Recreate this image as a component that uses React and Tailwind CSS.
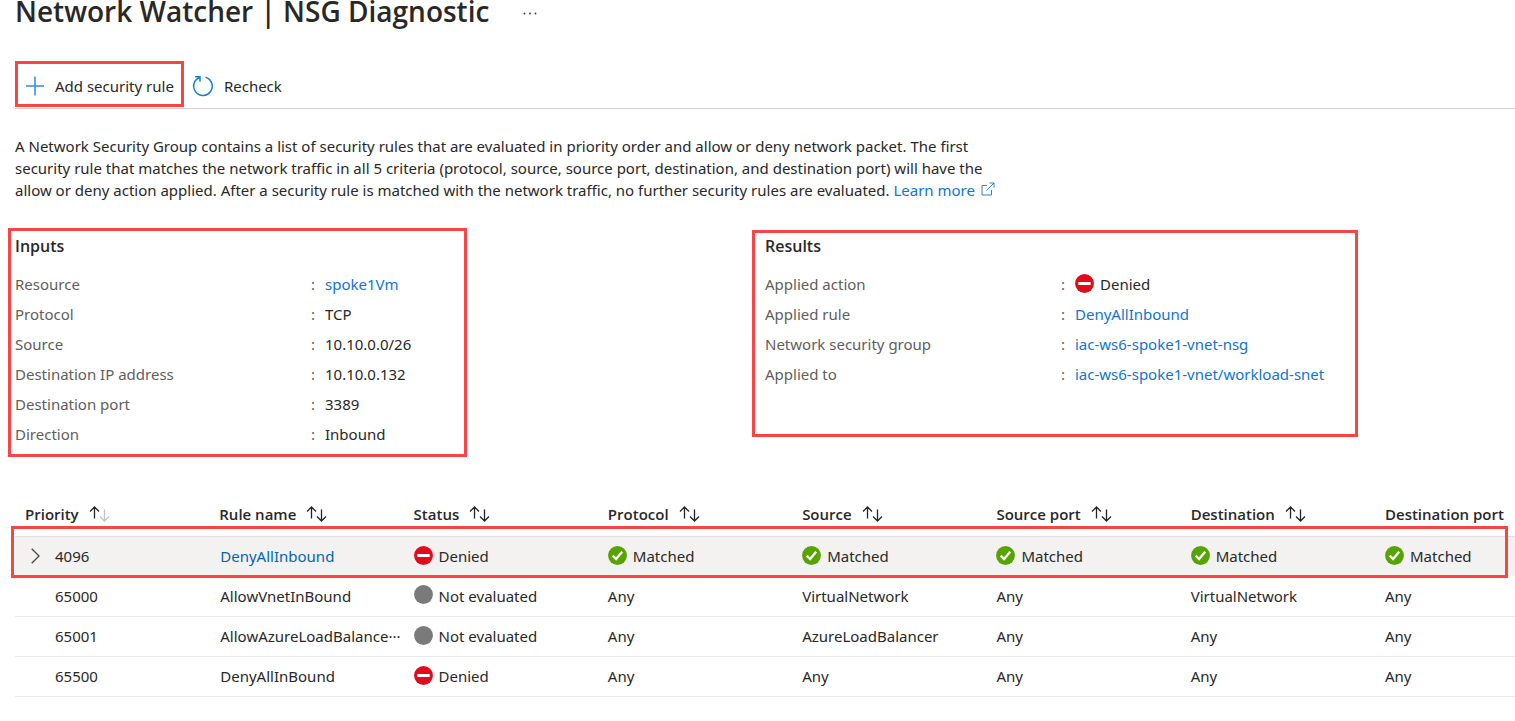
const columns = ['Priority', 'Rule name', 'Status', 'Protocol', 'Source', 'Source port', 'Destination', 'Destination port'];

const rules = [
  { priority: '4096', name: 'DenyAllInbound', link: true, status: 'Denied', cells: ['Matched', 'Matched', 'Matched', 'Matched', 'Matched'] },
  { priority: '65000', name: 'AllowVnetInBound', status: 'Not evaluated', cells: ['Any', 'VirtualNetwork', 'Any', 'VirtualNetwork', 'Any'] },
  { priority: '65001', name: 'AllowAzureLoadBalance···', status: 'Not evaluated', cells: ['Any', 'AzureLoadBalancer', 'Any', 'Any', 'Any'] },
  { priority: '65500', name: 'DenyAllInBound', status: 'Denied', cells: ['Any', 'Any', 'Any', 'Any', 'Any'] },
];

const inputs = [
  ['Resource', <a href="#vm" className="text-[#0f75d1]">spoke1Vm</a>],
  ['Protocol', 'TCP'],
  ['Source', '10.10.0.0/26'],
  ['Destination IP address', '10.10.0.132'],
  ['Destination port', '3389'],
  ['Direction', 'Inbound'],
];

const results = [
  ['Applied action', <StatusLabel text="Denied" />],
  ['Applied rule', <a href="#rule" className="text-[#0f75d1]">DenyAllInbound</a>],
  ['Network security group', <a href="#nsg" className="text-[#0f75d1]">iac-ws6-spoke1-vnet-nsg</a>],
  ['Applied to', <a href="#subnet" className="text-[#0f75d1]">iac-ws6-spoke1-vnet/workload-snet</a>],
];

function StatusIcon({ text }) {
  return (
    <svg viewBox="0 0 19 19" className="mb-0.5 size-[19px] shrink-0" aria-hidden="true">
      {text === 'Denied' && (
        <>
          <circle cx="9.5" cy="9.5" r="9.4" fill="#e00b1c" />
          <rect x="3.3" y="8" width="12.4" height="3" rx="0.4" fill="#fff" />
        </>
      )}
      {text === 'Matched' && (
        <>
          <circle cx="9.5" cy="9.5" r="9.4" fill="#57a300" />
          <path d="M4.7 9.6 8.1 13 14.200 5.700" fill="none" stroke="#fff" strokeWidth="2.300" />
        </>
      )}
      {text === 'Not evaluated' && <circle cx="9.5" cy="9.5" r="9.4" fill="#7a7a7a" />}
    </svg>
  );
}

function StatusLabel({ text }) {
  return (
    <span className="flex items-center gap-1.5 whitespace-nowrap">
      <StatusIcon text={text} />
      {text}
    </span>
  );
}

function SortIcon({ ascending }) {
  return (
    <svg viewBox="0 0 21 16" className="h-4 w-[21px] shrink-0" fill="none" strokeWidth="1.3" aria-hidden="true">
      <path d="M5.500 12.500V1M1 5.500 5.500 1 10 5.500" stroke="#252423" />
      <path d="M15.500 3.500v11.500M11 10.500l4.500 4.500L20 10.500" stroke={ascending ? '#c4c4c4' : '#252423'} />
    </svg>
  );
}

function Facts({ title, rows, className, headingClass }) {
  return (
    <section className={className}>
      <h2 className={`text-base font-semibold font-['Open_Sans',sans-serif] ${headingClass}`}>{title}</h2>
      <dl>
        {rows.map(([label, value]) => (
          <div key={label} className="flex h-[30px] items-center">
            <dt className="flex w-[310px] shrink-0 justify-between pr-2.5 text-[#605e5c]">
              {label}
              <span>:</span>
            </dt>
            <dd className="whitespace-nowrap">{value}</dd>
          </div>
        ))}
      </dl>
    </section>
  );
}

export default function App() {
  return (
    <main className="overflow-x-hidden bg-white pb-6 font-['Noto_Sans','Open_Sans',sans-serif] text-[15px] leading-[22px] text-[#292827]">
      <header className="flex h-[61px] items-start gap-8 pl-[15px]">
        <h1 className="-mt-[9px] font-['Open_Sans',sans-serif] text-[28px] leading-10 font-semibold">Network Watcher | NSG Diagnostic</h1>
        <button type="button" aria-label="More options" className="pt-3 pl-0.5">
          <svg viewBox="0 0 14 3" className="h-[3px] w-3.5" fill="#323130">
            <circle cx="1.500" cy="1.500" r="0.9" />
            <circle cx="7" cy="1.500" r="0.9" />
            <circle cx="12.500" cy="1.500" r="0.9" />
          </svg>
        </button>
      </header>

      <div className="ml-[15px] flex items-center gap-2 border-b border-[#d0d0d0] pb-px">
        <button type="button" className="flex h-[46px] items-center gap-2.5 border-3 border-[#fb4444] pt-1 pr-[7px] pl-[7px] whitespace-nowrap">
          <svg viewBox="0 0 20 20" className="size-5" fill="none" stroke="#2f8ddb" strokeWidth="1.5" aria-hidden="true">
            <path d="M10 .5v19M1 10h18" />
          </svg>
          Add security rule
        </button>
        <button type="button" className="flex h-[46px] items-center gap-2.5 pt-1 whitespace-nowrap">
          <svg viewBox="0 0 22 22" className="size-[22px]" fill="none" stroke="#1a7fd6" strokeWidth="1.500" aria-hidden="true">
            <path d="M13.500 2.200A9.300 9.300 0 1 1 7.500 2.500M3 1.700h5v5" />
          </svg>
          Recheck
        </button>
      </div>

      <p className="mt-[26px] ml-[15px] max-w-[1000px]">
        A Network Security Group contains a list of security rules that are evaluated in priority order and allow or deny network packet. The first
        security rule that matches the network traffic in all 5 criteria (protocol, source, source port, destination, and destination port) will have the
        allow or deny action applied. After a security rule is matched with the network traffic, no further security rules are evaluated.{' '}
        <a href="#learn" className="inline-flex items-center gap-1.5 align-top whitespace-nowrap text-[#0f75d1]">
          Learn more
          <svg viewBox="0 0 14 14" className="mb-0.5 size-3.5" fill="none" stroke="currentColor" strokeWidth="0.9" aria-hidden="true">
            <path d="M6 3.500H1v9.500h9.500V8M8.500 1h4.500v4.500M13 1 5.500 8.500" />
          </svg>
        </a>
      </p>

      <div className="mt-[27px] mr-[19px] ml-2 grid grid-cols-2 items-start">
        <Facts title="Inputs" rows={inputs} headingClass="mb-2 leading-[30px]" className="h-[229px] w-[459px] border-3 border-[#fb4444] pl-1" />
        <Facts title="Results" rows={results} headingClass="mb-2.5 leading-[26px]" className="mt-0.5 h-[207px] w-[606px] border-3 border-[#fb4444] pl-2.5" />
      </div>

      <div className="relative mt-9 ml-[15px]">
        <table className="w-full table-fixed border-collapse text-left">
          <colgroup>
            {columns.map((c, i) => (
              <col key={c} className={i === 7 ? 'w-[140px]' : undefined} />
            ))}
          </colgroup>
          <thead>
            <tr className="h-[43px] border-b border-[#e1e1e1]">
              {columns.map((c, i) => (
                <th key={c} scope="col" className="overflow-hidden p-0 pl-2.5 font-['Open_Sans',sans-serif] font-semibold">
                  <button type="button" className="flex items-center gap-2.5 whitespace-nowrap">
                    {c}
                    {i < 7 && <SortIcon ascending={i === 0} />}
                  </button>
                </th>
              ))}
            </tr>
          </thead>
          <tbody>
            {rules.map((r, i) => (
              <tr key={r.priority} className={i === 0 ? 'h-10 bg-[#f3f2f1]' : 'h-10 border-b border-[#edebe9]'}>
                <td className="p-0 pl-2.5">
                  <span className="flex items-center">
                    <span className="flex w-[30px] pl-1.5">
                      {i === 0 && (
                        <button type="button" aria-label="Expand rule">
                          <svg viewBox="0 0 9 16" className="h-4 w-[9px]" fill="none" stroke="#484644" strokeWidth="1.3">
                            <path d="M.7.8 8 8 .7 15.200" />
                          </svg>
                        </button>
                      )}
                    </span>
                    {r.priority}
                  </span>
                </td>
                <td className="p-0 pl-[11px] whitespace-nowrap">
                  {r.link ? <a href="#rule" className="text-[#0065b3]">{r.name}</a> : r.name}
                </td>
                <td className="p-0 pl-2.5"><StatusLabel text={r.status} /></td>
                {r.cells.map((c, j) => (
                  <td key={j} className="p-0 pl-2.5">{c === 'Matched' ? <StatusLabel text={c} /> : c}</td>
                ))}
              </tr>
            ))}
          </tbody>
        </table>
        <div className="pointer-events-none absolute top-[33px] right-[7px] -left-1 h-[52px] border-3 border-[#fb4444]" />
      </div>
    </main>
  );
}
